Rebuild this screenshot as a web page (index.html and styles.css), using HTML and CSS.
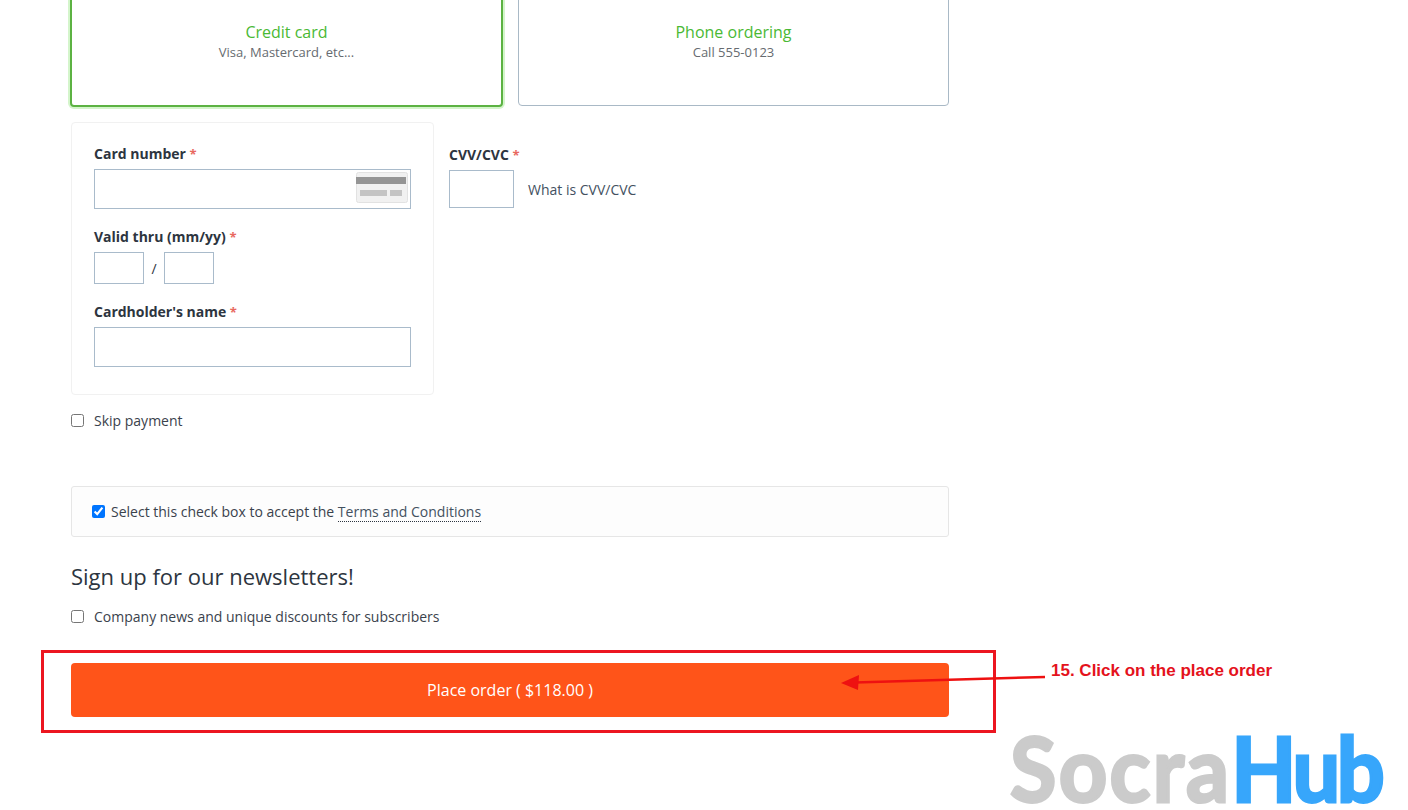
FILE: index.html
```html
<!DOCTYPE html>
<html lang="en">
<head>
  <meta charset="UTF-8" />
  <meta name="viewport" content="width=device-width, initial-scale=1" />
  <title>Checkout payment</title>
  <link rel="stylesheet" href="styles.css">
</head>
<body>
  <main class="checkout">
    <div class="methods">
      <div class="method selected">
        <span class="method-name">Credit card</span>
        <span class="method-note">Visa, Mastercard, etc...</span>
      </div>
      <div class="method">
        <span class="method-name">Phone ordering</span>
        <span class="method-note">Call 555-0123</span>
      </div>
    </div>

    <div class="card-row">
      <div class="card-box">
        <label class="field-label">Card number <span class="req">*</span></label>
        <div class="input number-input">
          <svg class="card-icon" width="52" height="31" viewBox="0 0 52 31">
            <rect x="0.5" y="0.5" width="51" height="30" rx="2" fill="#f1f1f1" stroke="#e2e2e2" />
            <rect x="0" y="5" width="50" height="7" fill="#959595" />
            <rect x="4" y="18" width="27" height="6" fill="#c4c4c4" />
            <rect x="34" y="18" width="12" height="6" fill="#c4c4c4" />
          </svg>
        </div>
        <label class="field-label valid-label">Valid thru (mm/yy) <span class="req">*</span></label>
        <div class="valid-row">
          <div class="input small-input"></div>
          <span class="slash">/</span>
          <div class="input small-input"></div>
        </div>
        <label class="field-label name-label">Cardholder's name <span class="req">*</span></label>
        <div class="input name-input"></div>
      </div>
      <div class="cvv-box">
        <label class="field-label">CVV/CVC <span class="req">*</span></label>
        <div class="cvv-row">
          <div class="input cvv-input"></div>
          <span class="cvv-link">What is CVV/CVC</span>
        </div>
      </div>
    </div>

    <label class="check-line skip">
      <input type="checkbox" /> <span>Skip payment</span>
    </label>

    <div class="terms">
      <input type="checkbox" checked />
      <span>Select this check box to accept the <a class="terms-link">Terms and Conditions</a></span>
    </div>

    <h2 class="news-title">Sign up for our newsletters!</h2>
    <label class="check-line news">
      <input type="checkbox" /> <span>Company news and unique discounts for subscribers</span>
    </label>

    <button class="place-order">Place order ( $118.00 )</button>
  </main>

  <!-- screenshot annotation on top of the page -->
  <div class="mark-box"></div>
  <svg class="mark-arrow" width="210" height="20" viewBox="0 0 210 20">
    <line x1="204" y1="4" x2="14" y2="9.5" stroke="#ee1111" stroke-width="2.5" />
    <polygon points="0,10 18,2 17,17" fill="#ee1111" />
  </svg>
  <div class="mark-text">15. Click on the place order</div>
  <div class="logo">Socra<span class="logo-hub">Hub</span></div>
</body>
</html>
```

FILE: styles.css
```css
* {
  box-sizing: border-box;
}
html, body {
  height: 810px;
  overflow: hidden;
}
body {
  margin: 0;
  position: relative;
  background: #fff;
  font-family: "Open Sans", "Noto Sans", sans-serif;
  font-size: 14px;
  color: #2d3540;
}
.checkout {
  width: 878px;
  margin-left: 71px;
}
.methods {
  display: flex;
  align-items: flex-start;
  gap: 15px;
  height: 126px;
  margin-top: -20px;
}
.method {
  flex: 1;
  height: 126px;
  padding-top: 40px;
  display: flex;
  flex-direction: column;
  align-items: center;
  background: #fff;
  border: 1px solid #a9b9c6;
  border-radius: 4px;
}
.method.selected {
  flex: 0 0 433px;
  height: 127px;
  margin-left: -1px;
  padding-top: 39px;
  border: 2px solid #5cb243;
  box-shadow: 0 0 0 2px #d4f5cb;
}
.method-name {
  font-size: 16px;
  line-height: 22px;
  color: #4ab934;
}
.method-note {
  font-size: 13px;
  line-height: 19px;
  color: #666b70;
}
.card-row {
  display: flex;
  gap: 15px;
  margin-top: 16px;
}
.card-box {
  width: 363px;
  height: 273px;
  padding: 21px 22px 0;
  border: 1px solid #f1f1f1;
  border-radius: 4px;
}
.field-label {
  display: block;
  font-weight: 700;
  line-height: 20px;
  height: 25px;
}
.req {
  color: #e8695f;
  font-size: 13px;
}
.input {
  background: #fff;
  border: 1px solid #a9bbcb;
}
.number-input {
  height: 40px;
  display: flex;
  justify-content: flex-end;
  align-items: flex-start;
  padding: 2px 2px 0 0;
}
.valid-label {
  margin-top: 18px;
}
.valid-row {
  display: flex;
  align-items: center;
}
.small-input {
  width: 50px;
  height: 32px;
}
.slash {
  width: 20px;
  text-align: center;
}
.name-label {
  margin-top: 18px;
}
.name-input {
  height: 40px;
}
.cvv-box {
  padding-top: 23px;
}
.cvv-row {
  display: flex;
  align-items: center;
  gap: 14px;
}
.cvv-input {
  width: 65px;
  height: 38px;
}
.cvv-link {
  color: #43515f;
}
.check-line {
  display: flex;
  align-items: center;
  gap: 10px;
  line-height: 20px;
  color: #3a424c;
}
.check-line input {
  width: 13px;
  height: 13px;
  margin: 0 0 2px;
}
.terms input {
  width: 13px;
  height: 13px;
  margin: 0;
}
.skip {
  margin-top: 16px;
}
.terms {
  display: flex;
  align-items: center;
  gap: 6px;
  height: 51px;
  margin-top: 55px;
  padding-left: 20px;
  background: #fdfdfd;
  border: 1px solid #e6e6e6;
  border-radius: 3px;
  color: #3a424c;
}
.terms-link {
  color: #43515f;
  border-bottom: 1px dotted #2d3540;
}
.news-title {
  margin: 25px 0 0;
  font-size: 22px;
  font-weight: 400;
  line-height: 29px;
  color: #2d3540;
}
.news {
  margin-top: 16px;
}
.place-order {
  display: block;
  width: 100%;
  height: 54px;
  margin-top: 36px;
  border: none;
  border-radius: 4px;
  background: #ff5419;
  color: #fff;
  font-family: inherit;
  font-size: 16px;
}
.mark-box {
  position: absolute;
  left: 41px;
  top: 650px;
  width: 955px;
  height: 83px;
  border: 3px solid #ec1620;
}
.mark-arrow {
  position: absolute;
  left: 841px;
  top: 673px;
}
.mark-text {
  position: absolute;
  left: 1051px;
  top: 661px;
  font-family: "Liberation Sans", Arial, sans-serif;
  font-size: 17px;
  font-weight: 700;
  line-height: 20px;
  color: #e4121c;
}
.logo {
  position: absolute;
  left: 1010px;
  top: 724px;
  font-family: Lato, sans-serif;
  font-size: 90px;
  font-weight: 700;
  line-height: 86px;
  letter-spacing: 2.5px;
  white-space: nowrap;
  color: #cbcbcb;
  -webkit-text-stroke: 3px currentColor;
  transform: scaleX(0.94);
  transform-origin: left top;
}
.logo-hub {
  color: #37a6fb;
  letter-spacing: -3.5px;
}
```
